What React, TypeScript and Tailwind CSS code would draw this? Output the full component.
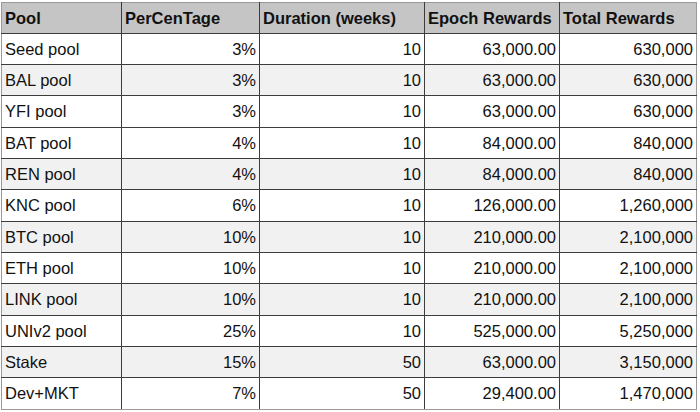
import React from "react";

const rows: [string, string, string, string, string][] = [
  ["Seed pool", "3%", "10", "63,000.00", "630,000"],
  ["BAL pool", "3%", "10", "63,000.00", "630,000"],
  ["YFI pool", "3%", "10", "63,000.00", "630,000"],
  ["BAT pool", "4%", "10", "84,000.00", "840,000"],
  ["REN pool", "4%", "10", "84,000.00", "840,000"],
  ["KNC pool", "6%", "10", "126,000.00", "1,260,000"],
  ["BTC pool", "10%", "10", "210,000.00", "2,100,000"],
  ["ETH pool", "10%", "10", "210,000.00", "2,100,000"],
  ["LINK pool", "10%", "10", "210,000.00", "2,100,000"],
  ["UNIv2 pool", "25%", "10", "525,000.00", "5,250,000"],
  ["Stake", "15%", "50", "63,000.00", "3,150,000"],
  ["Dev+MKT", "7%", "50", "29,400.00", "1,470,000"],
];

const grayRows = new Set([1, 4, 6, 8, 10]);
const heights = [31, 31, 32, 31, 31, 32, 31, 31, 32, 31, 31, 32];
const widths = ["w-[120px]", "w-[138px]", "w-[165px]", "w-[135px]", "w-[137px]"];
const headers = ["Pool", "PerCenTage", "Duration (weeks)", "Epoch Rewards", "Total Rewards"];

export default function App() {
  return (
    <div className="w-[700px] h-[412px] bg-white pt-[2px] pl-[1px]" style={{ fontFamily: '"Liberation Sans", Arial, sans-serif' }}>
      <table className="border-collapse table-fixed text-[16.5px] leading-none text-[#111]">
        <colgroup>
          {widths.map((w, i) => (
            <col key={i} className={w} />
          ))}
        </colgroup>
        <thead>
          <tr className="h-[31px] bg-[#c5c5c5]">
            {headers.map((h, i) => (
              <th
                key={i}
                className={`font-bold text-left px-[3px] border border-[#3c3c3c] border-t-[#9a9a9a] ${i === 0 ? "border-l-[#9a9a9a]" : ""} ${i === 4 ? "border-r-[#9a9a9a]" : ""}`}
              >
                {h}
              </th>
            ))}
          </tr>
        </thead>
        <tbody>
          {rows.map((r, ri) => (
            <tr
              key={ri}
              className={grayRows.has(ri) ? "bg-[#f1f1f1]" : "bg-white"}
              style={{ height: heights[ri] }}
            >
              {r.map((c, ci) => (
                <td
                  key={ci}
                  className={`px-[3px] border border-[#3c3c3c] ${ci === 0 ? "text-left border-l-[#9a9a9a]" : "text-right"} ${ci === 4 ? "border-r-[#9a9a9a]" : ""} ${ri === rows.length - 1 ? "border-b-[#9a9a9a]" : ""}`}
                >
                  {c}
                </td>
              ))}
            </tr>
          ))}
        </tbody>
      </table>
    </div>
  );
}
